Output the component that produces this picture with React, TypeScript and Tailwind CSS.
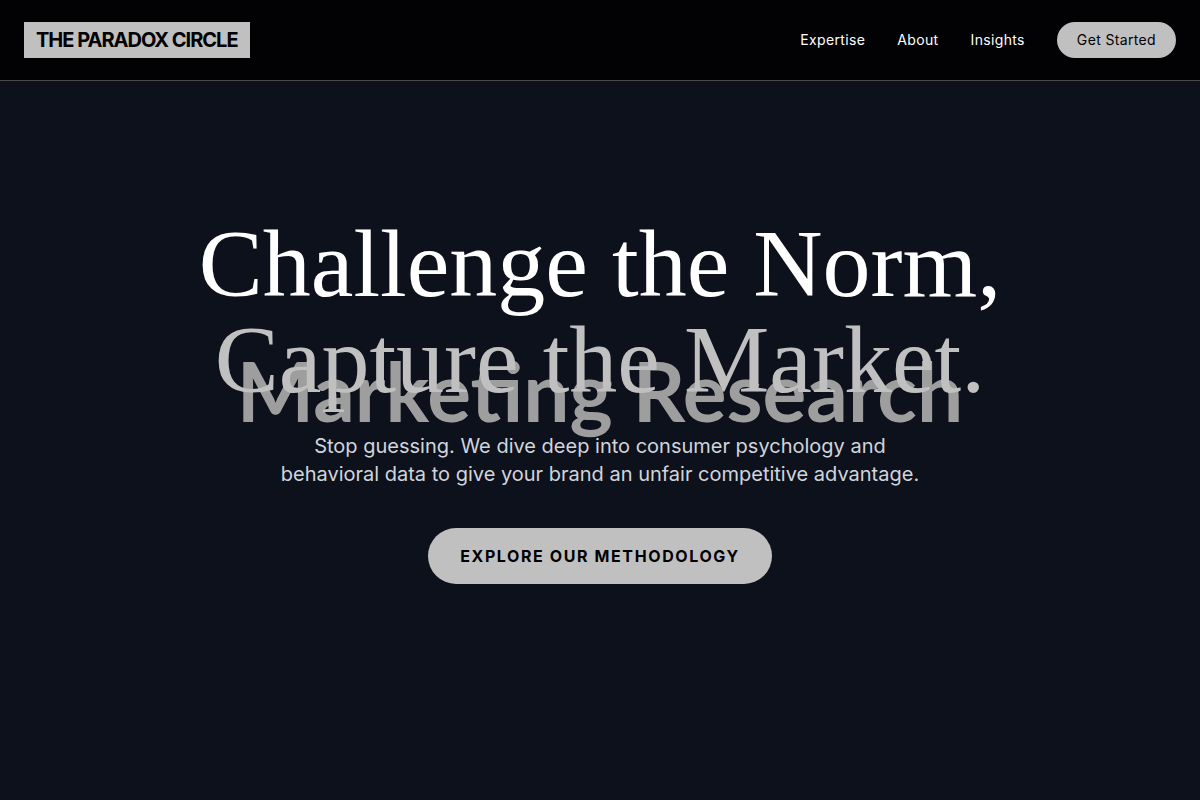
import React from "react";

function Header() {
  return (
    <header className="fixed inset-x-0 top-0 z-20 border-b border-[#4a4a4a] bg-[#020204]">
      <div className="flex h-20 items-center justify-between px-6">
        <a
          href="#"
          className="bg-[#c0c0c0] px-3 py-1 text-xl font-bold tracking-tighter text-black"
        >
          THE PARADOX CIRCLE
        </a>
        <nav className="flex items-center gap-8 text-sm tracking-wide text-white">
          <a href="#expertise">Expertise</a>
          <a href="#about">About</a>
          <a href="#insights">Insights</a>
          <button className="rounded-full bg-[#c0c0c0] px-5 py-2 tracking-wide text-black">
            Get Started
          </button>
        </nav>
      </div>
    </header>
  );
}

function Hero() {
  return (
    <section className="relative flex min-h-screen items-center justify-center px-6">
      {/* large wordmark sitting behind the headline */}
      <div className="absolute inset-0 flex items-center justify-center pb-5">
        <span className="whitespace-nowrap font-['Lato',sans-serif] text-[82px] leading-none font-bold text-[#9e9e9e]">
          Marketing Research
        </span>
      </div>

      <div className="relative text-center">
        <h1 className="mb-6 font-['Liberation_Serif',serif] text-8xl leading-none text-white">
          Challenge the Norm,
          <br />
          <span className="text-[#c0c0c0]">Capture the Market.</span>
        </h1>
        <p className="mx-auto mb-10 max-w-2xl text-xl text-gray-300">
          Stop guessing. We dive deep into consumer psychology and behavioral
          data to give your brand an unfair competitive advantage.
        </p>
        <button className="rounded-full bg-[#c0c0c0] px-8 py-4 font-bold tracking-widest text-black">
          EXPLORE OUR METHODOLOGY
        </button>
      </div>
    </section>
  );
}

function App() {
  return (
    <div className="min-h-screen bg-[#0d111c] font-['Inter',sans-serif]">
      <Header />
      <main>
        <Hero />
      </main>
    </div>
  );
}

export default App;
